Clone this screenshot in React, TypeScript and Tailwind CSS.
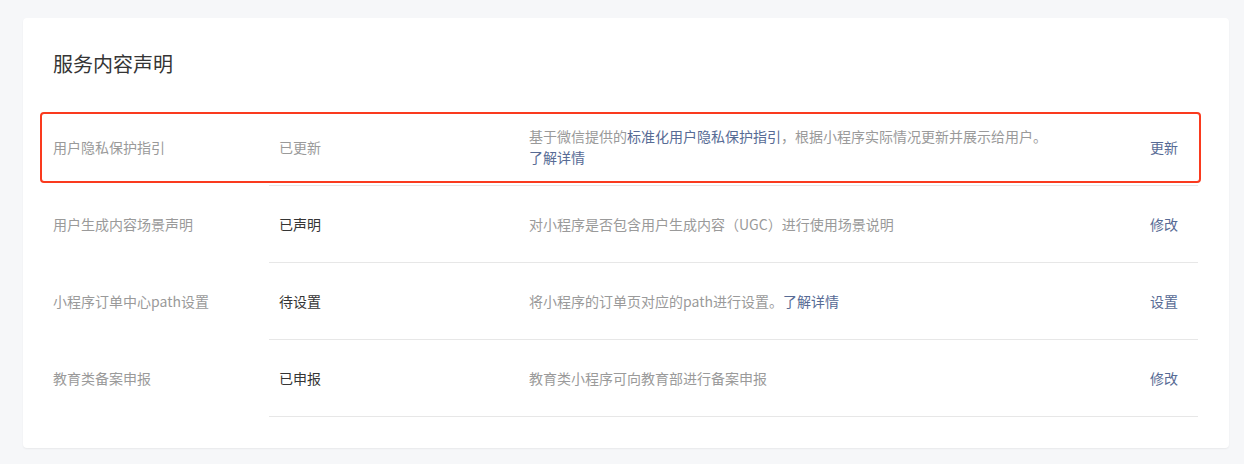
import type { ReactNode } from "react";

type Row = {
  label: string;
  status: string;
  done?: boolean;
  desc: ReactNode;
  action: string;
};

const Link = ({ children }: { children: ReactNode }) => (
  <a className="text-[#576b95] cursor-pointer">{children}</a>
);

const rows: Row[] = [
  {
    label: "用户隐私保护指引",
    status: "已更新",
    done: true,
    desc: (
      <>
        <div>
          基于微信提供的<Link>标准化用户隐私保护指引</Link>，根据小程序实际情况更新并展示给用户。
        </div>
        <div>
          <Link>了解详情</Link>
        </div>
      </>
    ),
    action: "更新",
  },
  {
    label: "用户生成内容场景声明",
    status: "已声明",
    desc: "对小程序是否包含用户生成内容（UGC）进行使用场景说明",
    action: "修改",
  },
  {
    label: "小程序订单中心path设置",
    status: "待设置",
    desc: (
      <>
        将小程序的订单页对应的path进行设置。<Link>了解详情</Link>
      </>
    ),
    action: "设置",
  },
  {
    label: "教育类备案申报",
    status: "已申报",
    desc: "教育类小程序可向教育部进行备案申报",
    action: "修改",
  },
];

export default function App() {
  return (
    <div
      className="min-h-[464px] bg-[#f6f7f9] pt-[18px] pl-[23px]"
      style={{ fontFamily: '"Noto Sans CJK SC", "Noto Sans", sans-serif' }}
    >
      <div className="relative w-[1206px] rounded bg-white pt-[32px] pb-[31px] pl-[30px] pr-[31px] shadow-[0_1px_2px_rgba(0,0,0,0.06)]">
        <h2 className="text-[20px] leading-[28px] text-[#353535]">服务内容声明</h2>

        <div className="mt-[31px]">
          {rows.map((row) => (
            <div key={row.label} className="flex text-[14px]">
              <div className="flex w-[216px] shrink-0 items-center text-[#9a9a9a]">
                {row.label}
              </div>
              <div className="flex h-[77px] flex-1 items-center border-b border-[#e7e7e7]">
                <div
                  className={
                    "w-[250px] shrink-0 pl-[10px] " +
                    (row.done ? "text-[#9a9a9a]" : "text-[#353535]")
                  }
                >
                  {row.status}
                </div>
                <div className="flex-1 pl-[10px] leading-[21px] text-[#9a9a9a]">
                  {row.desc}
                </div>
                <div className="pr-[20px] text-[#576b95]">{row.action}</div>
              </div>
            </div>
          ))}
        </div>

        {/* annotation highlight */}
        <div className="pointer-events-none absolute left-[17px] top-[94px] h-[71px] w-[1161px] rounded border-2 border-[#fa3a1e]" />
      </div>
    </div>
  );
}
